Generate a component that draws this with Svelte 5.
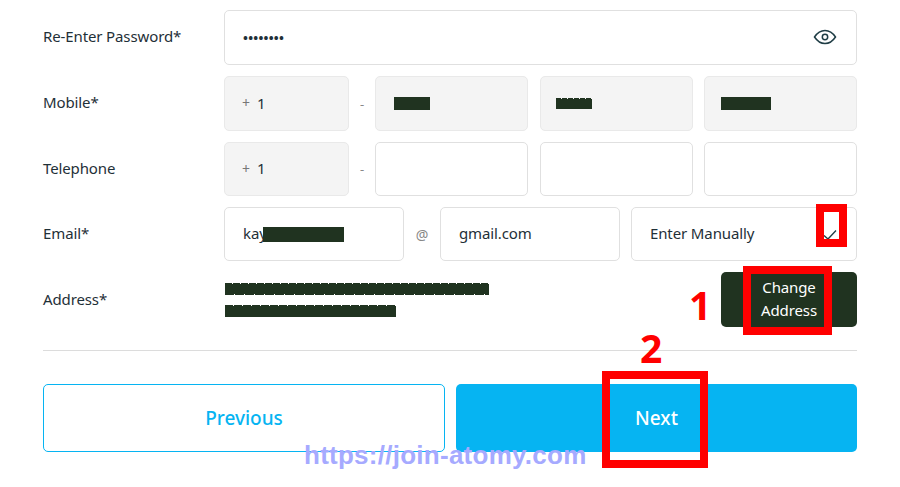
<script>
  const parts = [
    { bar: 'b1' },
    { bar: 'b2' },
    { bar: 'b3' }
  ];
  const blanks = [{}, {}, {}];
</script>

<div class="page">
  <form class="form">
    <div class="row">
      <span class="label">Re-Enter Password*</span>
      <div class="box pw">
        <span class="dots">••••••••</span>
        <svg class="eye" viewBox="0 0 24 24" width="24" height="24" fill="none" stroke="#1f3d45" stroke-width="1.5" aria-hidden="true">
          <path d="M1.500 12C4.500 7.500 8 5.500 12 5.500S19.500 7.500 22.500 12C19.500 16.500 16 18.500 12 18.500S4.500 16.500 1.500 12Z" />
          <circle cx="12" cy="12" r="2.700" />
        </svg>
      </div>
    </div>

    <div class="row">
      <span class="label">Mobile*</span>
      <div class="phone">
        <div class="box grey cc"><span class="plus">+</span><span>1</span></div>
        <span class="sep">-</span>
        {#each parts as p}
          <div class="box grey"><span class="bar {p.bar}"></span></div>
        {/each}
      </div>
    </div>

    <div class="row">
      <span class="label">Telephone</span>
      <div class="phone">
        <div class="box grey cc"><span class="plus">+</span><span>1</span></div>
        <span class="sep">-</span>
        {#each blanks as b}
          <div class="box"></div>
        {/each}
      </div>
    </div>

    <div class="row">
      <span class="label">Email*</span>
      <div class="email">
        <div class="box text"><span class="val">kay</span><span class="bar b4"></span></div>
        <span class="sep at">@</span>
        <div class="box text"><span class="val">gmail.com</span></div>
        <div class="box text select">
          <span class="val">Enter Manually</span>
          <svg class="check" viewBox="0 0 16 16" width="16" height="16" fill="none" stroke="#1f3d45" stroke-width="1.300" aria-hidden="true">
            <path d="M2 9.500 6 13 14 4.500" />
          </svg>
        </div>
      </div>
    </div>

    <div class="row">
      <span class="label addr">Address*</span>
      <div class="address">
        <div class="lines">
          <span class="bar b5"></span>
          <span class="bar b6"></span>
        </div>
        <button type="button" class="change"><span>Change<br />Address</span></button>
      </div>
    </div>

    <hr />

    <div class="actions">
      <button type="button" class="prev">Previous</button>
      <button type="button" class="next">Next</button>
    </div>
  </form>

  <i class="mark m-check"></i>
  <i class="mark m-addr"></i>
  <i class="mark m-next"></i>
  <b class="num n1">1</b>
  <b class="num n2">2</b>
  <span class="water">https://join-atomy.com</span>
</div>

<style>
  :global(body) {
    margin: 0;
    background: #fff;
  }
  .page {
    position: relative;
    width: 900px;
    height: 487px;
    overflow: hidden;
    font-family: "Noto Sans", "Open Sans", sans-serif;
    font-size: 15px;
    letter-spacing: -0.120px;
    color: #1f3038;
  }
  .form {
    padding: 10px 43px 0;
    display: flex;
    flex-direction: column;
    gap: 11px;
  }
  .row {
    display: grid;
    grid-template-columns: 181px 1fr;
    align-items: center;
    height: 55px;
  }
  .row:nth-child(3), .row:nth-child(4) {
    height: 54px;
  }
  .label {
    margin-top: -3px;
  }
  .label.addr {
    margin-top: -1px;
  }
  .box {
    box-sizing: border-box;
    height: 100%;
    border: 1.500px solid #e0e0e0;
    border-radius: 5px;
    background: #fff;
    display: flex;
    align-items: center;
    min-width: 0;
  }
  .grey {
    background: #f4f4f4;
    border-color: #e9e9e9;
  }
  .pw {
    padding: 0 19px 2px 18px;
    justify-content: space-between;
  }
  .dots {
    font-size: 13px;
    font-weight: 700;
    letter-spacing: 0.250px;
    margin-top: 2px;
  }
  .phone, .email, .address {
    height: 100%;
    display: grid;
    align-items: center;
  }
  .phone {
    grid-template-columns: 125px 26px 153px 153px 153px;
  }
  .phone .box:nth-child(3) { width: 153px; }
  .phone .box:nth-child(4) { margin-left: 12px; width: 153px; }
  .phone .box:nth-child(5) { margin-left: 23px; width: 153px; }
  .cc {
    padding: 0 0 2px 17px;
    gap: 7px;
    font-size: 15px;
  }
  .plus {
    color: #777;
    font-size: 14px;
  }
  .sep {
    text-align: center;
    color: #888;
    font-size: 13px;
  }
  .email {
    grid-template-columns: 180px 36px 180px 226px;
  }
  .email .select {
    margin-left: 11px;
    width: 226px;
    justify-content: space-between;
    padding-right: 18px;
  }
  .text {
    padding-left: 18px;
  }
  .val {
    margin-top: -2px;
  }
  .at {
    font-size: 14px;
  }
  .bar {
    display: block;
    background: #203320;
  }
  .b1 { width: 36px; height: 13px; margin-left: 18px; }
  .b2 {
    width: 36px;
    height: 11px;
    margin-left: 15px;
    background: repeating-linear-gradient(90deg, #203320 0 5px, #f4f4f4 5px 6px) top / 100% 1px no-repeat,
      linear-gradient(#203320, #203320) bottom / 100% 10px no-repeat;
  }
  .b3 { width: 50px; height: 13px; margin-left: 16px; }
  .b4 { width: 81px; height: 15px; margin-left: -4px; }
  .b5 {
    width: 264px;
    height: 12px;
    background: repeating-linear-gradient(90deg, #203320 0 7px, #fff 7px 8px) top / 100% 1px no-repeat,
      repeating-linear-gradient(90deg, #203320 0 9px, #fff 9px 10px) bottom / 100% 1px no-repeat,
      linear-gradient(#203320, #203320) center / 100% 10px no-repeat;
  }
  .b6 {
    width: 171px;
    height: 12px;
    background: repeating-linear-gradient(90deg, #203320 0 8px, #fff 8px 9px) top / 100% 1px no-repeat,
      linear-gradient(#203320, #203320) bottom / 100% 11px no-repeat;
  }
  .address {
    grid-template-columns: 1fr 136px;
  }
  .lines {
    display: flex;
    flex-direction: column;
    gap: 10px;
    margin-left: 1px;
    margin-top: 1px;
  }
  button {
    font-family: inherit;
    letter-spacing: inherit;
    cursor: pointer;
  }
  .change {
    height: 100%;
    border: 0;
    border-radius: 5px;
    background: #203320;
    color: #fff;
    font-size: 15px;
    line-height: 23px;
    padding: 0 0 1px 0;
  }
  hr {
    margin: 12px 0 22px;
    border: 0;
    border-top: 1.500px solid #dcdcdc;
  }
  .actions {
    display: grid;
    grid-template-columns: 402px 401px;
    gap: 11px;
    height: 68px;
  }
  .prev, .next {
    border-radius: 5px;
    font-size: 19px;
    font-weight: 500;
    letter-spacing: 0;
    padding: 0;
  }
  .prev {
    background: #fff;
    color: #06b4f2;
    border: 1.500px solid #06b4f2;
  }
  .next {
    background: #06b4f2;
    color: #fff;
    border: 0;
  }
  .mark {
    position: absolute;
    box-sizing: border-box;
    border: 8px solid #f00;
  }
  .m-check { left: 816px; top: 204px; width: 31px; height: 43px; }
  .m-addr { left: 743px; top: 266px; width: 89px; height: 69px; }
  .m-next { left: 602px; top: 371px; width: 106px; height: 97px; }
  .num {
    position: absolute;
    color: #f00;
    font-family: "Noto Sans", sans-serif;
    font-weight: 700;
    font-size: 39px;
    line-height: 1;
    letter-spacing: 0;
  }
  .n1 { left: 689px; top: 285px; }
  .n2 { left: 640px; top: 328px; }
  .water {
    position: absolute;
    left: 304px;
    top: 440px;
    color: #a6aaff;
    font-family: "Liberation Sans", sans-serif;
    font-weight: 700;
    font-size: 26px;
    line-height: 30px;
    letter-spacing: 0.260px;
    white-space: nowrap;
  }
</style>
